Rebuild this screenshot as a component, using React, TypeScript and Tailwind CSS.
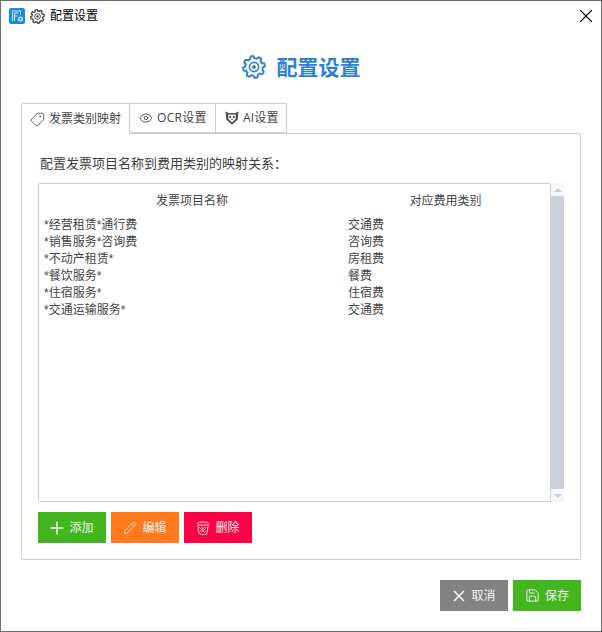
import { Eye, Pencil, Plus, Save, Tag, X } from "lucide-react";

const rows = [
  ["*经营租赁*通行费", "交通费"],
  ["*销售服务*咨询费", "咨询费"],
  ["*不动产租赁*", "房租费"],
  ["*餐饮服务*", "餐费"],
  ["*住宿服务*", "住宿费"],
  ["*交通运输服务*", "交通费"],
];

// eight lobed outline, worked out once instead of a long hand written path
const gearPoints = Array.from({ length: 96 }, (_, i) => {
  const a = (i / 96) * Math.PI * 2;
  const r = 9.8 + Math.max(-1, Math.min(1, Math.cos(a * 8 + Math.PI / 2) * 2)) * 1.1;
  return `${(12 + r * Math.cos(a)).toFixed(2)},${(12 + r * Math.sin(a)).toFixed(2)}`;
}).join(" ");

function GearIcon({ className, strokeWidth = 2 }: { className: string; strokeWidth?: number }) {
  return (
    <svg viewBox="0 0 24 24" className={`shrink-0 ${className}`}>
      <polygon points={gearPoints} fill="none" stroke="currentColor" strokeWidth={strokeWidth} strokeLinejoin="round" />
      <circle cx="12" cy="12" r="4.6" fill="none" stroke="currentColor" strokeWidth="1.6" />
      <circle cx="12" cy="12" r="1.9" fill="currentColor" />
    </svg>
  );
}

function AppIcon() {
  return (
    <svg width="16" height="16" viewBox="0 0 16 16" className="shrink-0">
      <rect width="16" height="16" rx="2" fill="#1e88e5" />
      <path d="M3.5 13V3h8v4M5.5 13V5h4M5.5 8h3" fill="none" stroke="#d5ecff" strokeWidth="1" />
      <circle cx="11.5" cy="11" r="2.6" fill="#bfe2ff" />
      <circle cx="11.5" cy="11" r="1" fill="#1e88e5" />
    </svg>
  );
}

function AiIcon() {
  return (
    <svg width="14" height="14" viewBox="0 0 14 14" className="shrink-0">
      <path d="M0.5 0.5l3 1.5h7l3-1.5-.8 8L7 13.8 1.3 8.5z" fill="#4b4f52" />
      <path d="M3.2 3.6h7.6v4.2L7 11.6 3.2 7.8z" fill="#f1f1f1" />
      <circle cx="5.2" cy="6" r="1" fill="#333" />
      <circle cx="8.8" cy="6" r="1" fill="#333" />
      <path d="M6 8h2l-1 1.2z" fill="#333" />
    </svg>
  );
}

function TrashIcon() {
  return (
    <svg width="14" height="14" viewBox="0 0 14 14" fill="none" stroke="#ffd5de" strokeWidth="1" className="shrink-0">
      <ellipse cx="7" cy="2.6" rx="5.6" ry="1.6" />
      <path d="M1.8 3.5l1 8.6c.1.9 2 1.4 4.2 1.4s4.1-.5 4.2-1.4l1-8.6" />
      <path d="M3 6l6 6M5 5.6l5.6 5.6M11 6l-6 6M9 5.6l-5.6 5.6" strokeWidth="0.7" />
    </svg>
  );
}

function ActionButton({ color, icon, label }: { color: string; icon: React.ReactNode; label: string }) {
  return (
    <button className={`flex h-[31px] w-[68px] items-center justify-center gap-[5px] text-xs text-[#f4f4f4] ${color}`}>
      {icon}
      <span>{label}</span>
    </button>
  );
}

export default function App() {
  return (
    <div
      className="flex h-[632px] w-[602px] flex-col border border-[#6e6e6e] bg-white text-xs text-[#3d3d3d]"
      style={{ fontFamily: '"Open Sans", "Noto Sans CJK SC", sans-serif' }}
    >
      {/* title bar */}
      <div className="flex h-[30px] shrink-0 items-center pl-[8px] pr-[4px] text-black">
        <AppIcon />
        <GearIcon className="ml-[5px] h-[15px] w-[15px] text-[#444]" strokeWidth={2.2} />
        <span className="ml-[5px]">配置设置</span>
        <X className="ml-auto h-[22px] w-[22px]" strokeWidth={1.2} />
      </div>

      <div className="flex flex-1 flex-col px-[20px]">
        {/* heading */}
        <div className="mt-[20px] flex h-[32px] items-center justify-center gap-[11px] text-[21px] font-bold text-[#2e7fd6]">
          <GearIcon className="h-[24px] w-[24px]" />
          <span>配置设置</span>
        </div>

        {/* tabs */}
        <div className="mt-[20px] flex h-[30px] text-[#444]">
          <div className="relative z-10 -mb-px flex w-[109px] items-center gap-[4px] rounded-t-[2px] border border-b-0 border-[#d0d0d0] bg-white pl-[8px]">
            <Tag className="h-[15px] w-[15px] -scale-x-100" strokeWidth={1.3} />
            <span>发票类别映射</span>
          </div>
          <div className="flex w-[86px] items-center gap-[4px] border border-l-0 border-[#d0d0d0] pl-[9px]">
            <Eye className="h-[14px] w-[14px]" strokeWidth={1.5} />
            <span className="tracking-[0.3px]">OCR设置</span>
          </div>
          <div className="flex w-[71px] items-center gap-[4px] border border-l-0 border-[#d0d0d0] pl-[9px]">
            <AiIcon />
            <span className="tracking-[0.2px]">AI设置</span>
          </div>
        </div>

        {/* panel */}
        <div className="flex h-[427px] w-[560px] flex-col rounded-b-[2px] border border-[#d0d0d0] px-[16px]">
          <div className="mt-[20px] h-[18px] pl-[2px] text-[13px] leading-[18px]">配置发票项目名称到费用类别的映射关系：</div>

          <div className="mt-[11px] flex h-[319px]">
            <div className="w-[513px] rounded-[2px] border border-[#d0d0d0] text-[#444]">
              <div className="mt-[8px] grid h-[17px] grid-cols-[306px_201px] items-center text-center leading-[17px]">
                <span>发票项目名称</span>
                <span>对应费用类别</span>
              </div>
              <div className="mt-[8px]" style={{ fontFamily: '"Liberation Sans", "Noto Sans CJK SC", sans-serif' }}>
                {rows.map(([name, type]) => (
                  <div key={name} className="grid h-[17px] grid-cols-[309px_1fr] leading-[17px]">
                    <span className="pl-[5px]">{name}</span>
                    <span>{type}</span>
                  </div>
                ))}
              </div>
            </div>
            {/* scrollbar */}
            <div className="flex w-[13px] flex-col bg-[#f6f7f9]">
              <div className="flex h-[13px] items-center justify-center">
                <div className="h-0 w-0 border-x-[4px] border-b-[4px] border-x-transparent border-b-[#c9ced8]" />
              </div>
              <div className="flex-1 bg-[#cdd1dc]" />
              <div className="flex h-[13px] items-center justify-center">
                <div className="h-0 w-0 border-x-[4px] border-t-[4px] border-x-transparent border-t-[#c9ced8]" />
              </div>
            </div>
          </div>

          <div className="mt-[10px] flex gap-[5px]">
            <ActionButton color="bg-[#43b51f]" icon={<Plus className="-m-[3px] h-[20px] w-[20px]" strokeWidth={1.8} />} label="添加" />
            <ActionButton color="bg-[#ff7a1c]" icon={<Pencil className="h-[14px] w-[14px]" strokeWidth={1.2} />} label="编辑" />
            <ActionButton color="bg-[#ff0045]" icon={<TrashIcon />} label="删除" />
          </div>
        </div>

        {/* footer */}
        <div className="mt-[20px] flex w-[560px] justify-end gap-[5px]">
          <ActionButton color="bg-[#828282]" icon={<X className="-m-[2px] h-[18px] w-[18px]" strokeWidth={2.2} />} label="取消" />
          <ActionButton color="bg-[#43b51f]" icon={<Save className="h-[15px] w-[15px]" strokeWidth={1.5} />} label="保存" />
        </div>
      </div>
    </div>
  );
}
